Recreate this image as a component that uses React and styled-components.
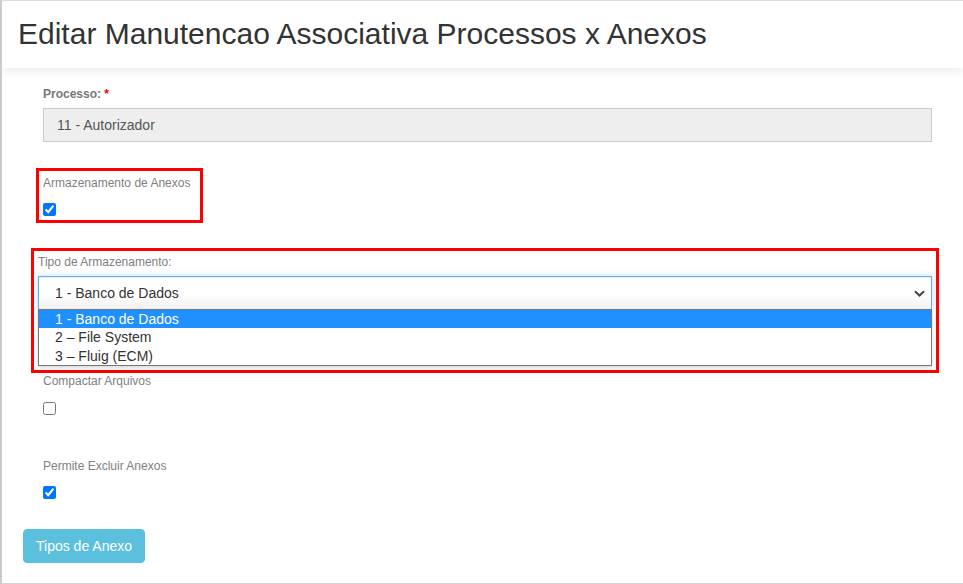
import React from "react";
import styled, { createGlobalStyle } from "styled-components";

const GlobalStyle = createGlobalStyle`
    html, body {
        margin: 0;
        padding: 0;
        background: #fff;
        font-family: "Liberation Sans", Arial, sans-serif;
    }
    * {
        box-sizing: border-box;
    }
`;

const Page = styled.div`
    height: 584px;
    border-left: 2px solid #cbcbcb;
    border-top: 1px solid #dcdcdc;
    border-bottom: 1px solid #d6d6d6;
    background: #fff;
    overflow: hidden;
`;

const Header = styled.header`
    height: 67px;
    padding: 16px 0 0 16px;
    background: #fff;
    box-shadow: 0 4px 9px rgba(0, 0, 0, 0.07);
    position: relative;
`;

const Title = styled.h1`
    margin: 0;
    font-size: 30px;
    line-height: 33px;
    font-weight: 400;
    color: #333;
`;

const Form = styled.form`
    padding: 18px 31px 0 41px;
    display: flex;
    flex-direction: column;
    align-items: flex-start;
`;

const Label = styled.label`
    display: block;
    font-size: 12px;
    line-height: 16px;
    color: ${(p) => (p.$bold ? "#777" : "#808080")};
    font-weight: ${(p) => (p.$bold ? 700 : 400)};
    margin-top: ${(p) => p.$top || 0}px;
`;

const Required = styled.span`
    color: #e00;
`;

const ReadOnlyInput = styled.div`
    width: 100%;
    height: 34px;
    margin-top: 6px;
    padding: 0 13px;
    display: flex;
    align-items: center;
    background: #eee;
    border: 1px solid #ccc;
    font-size: 14px;
    color: #555;
`;

const Highlight = styled.div`
    border: 3px solid #ff0000;
    margin-top: ${(p) => p.$top}px;
    margin-left: ${(p) => p.$left}px;
    align-self: ${(p) => (p.$wide ? "stretch" : "flex-start")};
    margin-right: ${(p) => (p.$wide ? -7 : 0)}px;
    width: ${(p) => (p.$wide ? "auto" : "167px")};
    padding: ${(p) => p.$pad};
`;

const Check = styled.input.attrs({ type: "checkbox" })`
    display: block;
    width: 13px;
    height: 13px;
    margin: ${(p) => p.$top}px 0 0 0;
    accent-color: #0075ff;
`;

const Select = styled.div`
    margin-top: 6px;
    height: 34px;
    padding: 0 6px 0 16px;
    display: flex;
    align-items: center;
    justify-content: space-between;
    border: 1px solid #66afe9;
    background: linear-gradient(#fff 55%, #f1f1f1);
    box-shadow: inset 0 1px 1px rgba(0, 0, 0, 0.075), 0 0 6px rgba(102, 175, 233, 0.45);
    font-size: 14px;
    color: #333;
`;

const OptionList = styled.ul`
    list-style: none;
    margin: -1px 0 0;
    padding: 0;
    border: 1px solid #767676;
    background: #fff;
    box-shadow: 0 2px 4px rgba(0, 0, 0, 0.15);
`;

const Option = styled.li`
    height: 18.4px;
    line-height: 18.4px;
    padding-left: 16px;
    font-size: 14px;
    color: ${(p) => (p.$active ? "#fff" : "#333")};
    background: ${(p) => (p.$active ? "#1e90ff" : "#fff")};
`;

const Button = styled.button`
    margin: 30px 0 0 -20px;
    height: 34px;
    padding: 0 12px;
    border: 1px solid #5bc0de;
    border-radius: 4px;
    background: #5bc0de;
    color: #fff;
    font-family: inherit;
    font-size: 14px;
`;

const Chevron = () => (
    <svg width="11" height="7" viewBox="0 0 11 7">
        <path d="M1 1.2 L5.5 5.5 L10 1.2" fill="none" stroke="#444" strokeWidth="2" />
    </svg>
);

export default function App() {
    const opcoes = ["1 - Banco de Dados", "2 \u2013 File System", "3 \u2013 Fluig (ECM)"];

    return (
        <Page>
            <GlobalStyle />
            <Header>
                <Title>Editar Manutencao Associativa Processos x Anexos</Title>
            </Header>

            <Form>
                <Label $bold>
                    Processo: <Required>*</Required>
                </Label>
                <ReadOnlyInput>11 - Autorizador</ReadOnlyInput>

                <Highlight $top={26} $left={-7} $pad="4px 4px 4px 4px">
                    <Label>Armazenamento de Anexos</Label>
                    <Check $top={12} defaultChecked />
                </Highlight>

                <Highlight $wide $top={25} $left={-12} $pad="3px 4px 4px 4px">
                    <Label>Tipo de Armazenamento:</Label>
                    <Select>
                        <span>1 - Banco de Dados</span>
                        <Chevron />
                    </Select>
                    <OptionList>
                        {opcoes.map((o, i) => (
                            <Option key={o} $active={i === 0}>{o}</Option>
                        ))}
                    </OptionList>
                </Highlight>

                <Label>Compactar Arquivos</Label>
                <Check $top={13} />

                <Label $top={43}>Permite Excluir Anexos</Label>
                <Check $top={12} defaultChecked />

                <Button type="button">Tipos de Anexo</Button>
            </Form>
        </Page>
    );
}
